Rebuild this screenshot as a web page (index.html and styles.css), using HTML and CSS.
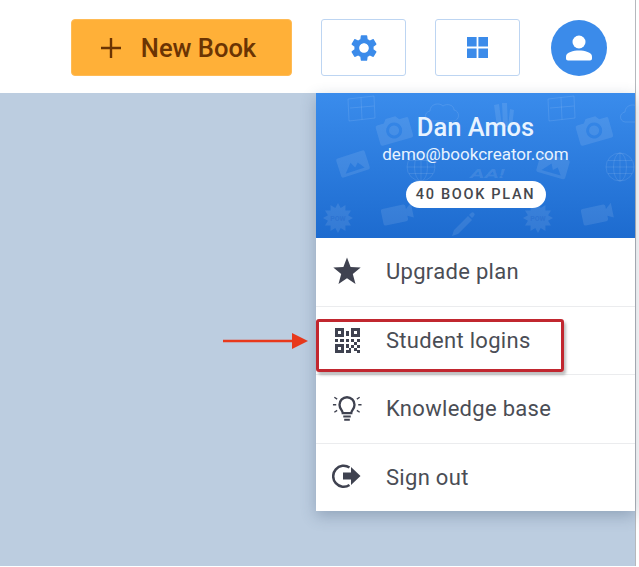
FILE: index.html
```html
<!DOCTYPE html>
<html lang="en">
<head>
<meta charset="utf-8">
<title>Book Creator</title>
<link rel="stylesheet" href="styles.css">
</head>
<body>
<div class="app">
  <header class="topbar">
    <button class="new-book">
      <svg class="plus" viewBox="0 0 22 22"><path d="M11 1v20M1 11h20"/></svg>
      <span>New Book</span>
    </button>
    <button class="tool">
      <svg class="tool-icon" viewBox="0 0 24 24"><path fill-rule="evenodd" d="M19.14 12.94c.04-.3.06-.61.06-.94 0-.32-.02-.64-.07-.94l2.03-1.58c.18-.14.23-.41.12-.61l-1.92-3.32c-.12-.22-.37-.29-.59-.22l-2.39.96c-.5-.38-1.03-.7-1.62-.94l-.36-2.54c-.04-.24-.24-.41-.48-.41h-3.84c-.24 0-.43.17-.47.41l-.36 2.54c-.59.24-1.13.57-1.62.94l-2.39-.96c-.22-.08-.47 0-.59.22L2.74 8.87c-.12.21-.08.47.12.61l2.03 1.58c-.05.3-.09.63-.09.94s.02.64.07.94l-2.03 1.58c-.18.14-.23.41-.12.61l1.92 3.32c.12.22.37.29.59.22l2.39-.96c.5.38 1.03.7 1.62.94l.36 2.54c.05.24.24.41.48.41h3.84c.24 0 .44-.17.47-.41l.36-2.54c.59-.24 1.13-.56 1.62-.94l2.39.96c.22.08.47 0 .59-.22l1.92-3.32c.12-.22.07-.47-.12-.61l-2.01-1.58zM12 15.6c-1.98 0-3.6-1.62-3.6-3.6s1.62-3.6 3.6-3.6 3.6 1.62 3.6 3.6-1.62 3.6-3.6 3.6z"/></svg>
    </button>
    <button class="tool">
      <svg class="grid-icon" viewBox="0 0 21 21"><path d="M0 0h9.6v9.6H0zM11.4 0H21v9.6h-9.6zM0 11.4h9.6V21H0zM11.4 11.4H21V21h-9.6z"/></svg>
    </button>
    <button class="avatar">
      <svg class="avatar-icon" viewBox="0 0 26 26"><circle cx="13" cy="7" r="6.5"/><path d="M2 25.500c-1.200 0-2-.8-2-2v-1.900C0 17.400 7.500 15.600 13 15.600s13 1.800 13 6v1.900c0 1.200-.8 2-2 2z"/></svg>
    </button>
  </header>
  <main class="stage">
    <svg class="arrow" viewBox="0 0 86 18"><path d="M0 9h70" stroke-width="2.4"/><path class="arrow-head" d="M69 1l16 8-16 8z"/></svg>
    <nav class="menu">
      <section class="profile">
        <svg class="pattern" viewBox="0 0 319 145">
          <defs>
            <g id="camera"><path fill-rule="evenodd" d="M-15-9h7l3-4h10l3 4h7a2 2 0 0 1 2 2v17a2 2 0 0 1-2 2h-30a2 2 0 0 1-2-2V-7a2 2 0 0 1 2-2zM0-7.500a8 8 0 1 0 .1 0zM0-4.500a5 5 0 1 1-.1 0z"/></g>
            <g id="picture"><path fill-rule="evenodd" d="M-13-10h26a2 2 0 0 1 2 2v16a2 2 0 0 1-2 2h-26a2 2 0 0 1-2-2V-8a2 2 0 0 1 2-2zM-10 7h20l-5-7-4 4-3-6z"/></g>
            <g id="globe"><circle r="14"/><ellipse rx="6.500" ry="14"/><path d="M-14 0h28M-12-6.500h24M-12 6.500h24M0-14v28"/></g>
            <g id="frame"><path d="M-13-10l26-3 1 22-26 3zM-11-1l24-2M0-11.500l1 22"/></g>
            <g id="cloud"><path d="M-13 9c-6-1-6-9 0-10 0-7 9-9 13-5 4-3 11-1 11 4 6 1 6 10 0 11z"/></g>
            <g id="burst"><path d="M15 0L10.100 2.700 13 7.500 7.400 7.400 7.500 13 2.700 10.100 0 15-2.700 10.100-7.500 13-7.400 7.400-13 7.500-10.100 2.700-15 0-10.100-2.700-13-7.500-7.400-7.400-7.500-13-2.700-10.100 0-15 2.700-10.100 7.500-13 7.400-7.400 13-7.500 10.100-2.700z"/></g>
            <g id="video"><path d="M-15-7a2 2 0 0 1 2-2H8a2 2 0 0 1 2 2v3l6-5v15l-6-3v3a2 2 0 0 1-2 2h-21a2 2 0 0 1-2-2z"/></g>
          </defs>
          <g class="pat-line">
            <use href="#frame" transform="translate(45 16)"/>
            <use href="#frame" transform="translate(245 16)"/>
            <use href="#cloud" transform="translate(127 19)"/>
            <use href="#cloud" transform="translate(322 20)"/>
            <use href="#globe" transform="translate(105 74)"/>
            <use href="#globe" transform="translate(304 74)"/>
          </g>
          <g class="pat-fill">
            <use href="#camera" transform="translate(78 37) rotate(-16)"/>
            <use href="#camera" transform="translate(278 37) rotate(-16)"/>
            <use href="#picture" transform="translate(37 71) rotate(-18)"/>
            <use href="#picture" transform="translate(237 73) rotate(16)"/>
            <use href="#burst" transform="translate(22 125)"/>
            <use href="#burst" transform="translate(222 125)"/>
            <use href="#video" transform="translate(81 122) rotate(-12)"/>
            <use href="#video" transform="translate(281 122) rotate(-12)"/>
            <path d="M178 12l5-1 3 22-5 1zM186 10l5 0 1 24-5 0zM194 16l4 1-2 17-4 0z"/>
            <path d="M138 137l14-14 4 4-14 14-6 2zM153 122l2-2a2 2 0 0 1 3 3l-2 2z"/>
            <text class="pat-aa" transform="translate(154 85) scale(1.7 1)">AA!</text>
          </g>
          <text class="pat-pow" x="22" y="128" text-anchor="middle">POW</text>
          <text class="pat-pow" x="222" y="128" text-anchor="middle">POW</text>
        </svg>
        <h1 class="name">Dan Amos</h1>
        <p class="email">demo@bookcreator.com</p>
        <span class="plan">40 BOOK PLAN</span>
      </section>
      <a class="item">
        <svg class="item-icon" viewBox="0 0 30 30"><path class="solid" d="M15 1.500l3.600 9.600 10.100.5-7.900 6.400 2.700 9.900-8.500-5.600-8.500 5.600 2.700-9.900-7.900-6.400 10.100-.5z"/></svg>
        <span>Upgrade plan</span>
      </a>
      <a class="item">
        <svg class="item-icon" viewBox="0 0 30 30"><path class="solid" fill-rule="evenodd" d="M3 4h9v9H3zM6 7v3h3V7zM19 4h9v9h-9zM22 7v3h3V7zM3 20h9v9H3zM6 23v3h3v-3zM14 7h3v5h-3zM3 15h3v3H3zM8 15h4v3H8zM14 15h3v3h-3zM19 15h3v3h-3zM25 15h3v3h-3zM22 18h3v3h-3zM14 20h3v4h-3zM19 21h3v3h-3zM25 21h3v3h-3zM17 24h2v5h-2zM14 26h3v3h-3zM22 24h3v3h-3zM25 26h3v3h-3z"/></svg>
        <span>Student logins</span>
        <span class="highlight"></span>
      </a>
      <a class="item">
        <svg class="item-icon" viewBox="0 0 32 32"><path class="line" d="M11.500 21.500c0-3-3.500-4.500-3.500-9a8 8 0 0 1 16 0c0 4.500-3.500 6-3.500 9z"/><path class="solid" d="M12 24h8v2h-8zM13 27.500h6v2h-6z"/><path class="thin" d="M1 12.500h3.500M28 12.500h3.500M2.500 4.500l3 2M29.500 4.500l-3 2M2.500 20.500l3-2M29.500 20.500l-3-2"/></svg>
        <span>Knowledge base</span>
      </a>
      <a class="item">
        <svg class="item-icon" viewBox="0 0 30 30"><path class="line" d="M17.500 6.500A10.500 10.500 0 1 0 17.500 24"/><path class="solid" d="M11 11.500h8V6l9.500 9-9.500 9v-5.500h-8z"/></svg>
        <span>Sign out</span>
      </a>
    </nav>
  </main>
</div>
</body>
</html>
```
FILE: styles.css
```css
* { box-sizing: border-box; }
html, body { margin: 0; padding: 0; background: #fff; }
body { width: 639px; height: 567px; overflow: hidden; font-family: Roboto, "Liberation Sans", sans-serif; }
.app { width: 636px; height: 566px; display: flex; flex-direction: column; border-right: 1px solid #b5b8bd; }
.topbar { height: 93px; flex: none; background: #fff; display: flex; align-items: center; padding: 2px 28px 0 71px; }
button { font-family: inherit; cursor: pointer; padding: 0; display: flex; align-items: center; justify-content: center; }
.new-book { width: 221px; height: 57px; background: #ffb038; border: 1px solid #ffbb55; border-radius: 4px; color: #6b3403; font-size: 25.500px; font-weight: 500; gap: 19px; padding-right: 7px; }
.plus { width: 22px; height: 22px; fill: none; stroke: #6b3403; stroke-width: 2.4; }
.tool { width: 85px; height: 57px; margin-left: 29px; background: #fff; border: 1px solid #bdd5f2; border-radius: 3px; }
.tool-icon { width: 32px; height: 32px; fill: #3b8bea; }
.grid-icon { width: 21px; height: 21px; fill: #3b8bea; }
.avatar { width: 56px; height: 56px; margin-left: 31px; border: 0; border-radius: 50%; background: #3b8bea; }
.avatar-icon { width: 26px; height: 26px; fill: #fff; }
.stage { flex: 1; background: #bccde0; position: relative; }
.arrow { position: absolute; left: 223px; top: 239px; width: 86px; height: 18px; }
.arrow path { stroke: #e8391c; fill: none; }
.arrow .arrow-head { fill: #e8391c; stroke: none; }
.menu { position: absolute; left: 316px; top: 0; width: 319px; height: 418px; background: #fff; display: flex; flex-direction: column; box-shadow: 0 5px 14px rgba(60, 80, 110, .32); }
.profile { height: 145px; flex: none; position: relative; display: flex; flex-direction: column; align-items: center; color: #e8f3ff; background: linear-gradient(#3a8cec, #1d6bcf); overflow: hidden; }
.pattern { position: absolute; inset: 0; width: 100%; height: 100%; }
.pat-line { fill: none; stroke: rgba(255, 255, 255, .1); stroke-width: 1; }
.pat-fill { fill: rgba(255, 255, 255, .1); }
.pat-aa { font-size: 13px; font-style: italic; font-weight: 700; }
.pat-pow { fill: rgba(30, 100, 200, .4); font-size: 7px; font-weight: 700; }
.name { position: relative; margin: 19px 0 0; font-size: 25.500px; line-height: 30px; font-weight: 500; }
.email { position: relative; margin: 2px 0 0; font-size: 17px; line-height: 20px; }
.plan { position: relative; margin-top: 17px; width: 140px; height: 27px; background: #fff; border-radius: 14px; color: #45474d; font-size: 14.500px; font-weight: 500; letter-spacing: 1.700px; line-height: 27px; text-align: center; }
.item { flex: 1; position: relative; display: flex; align-items: center; gap: 24px; padding-left: 16px; color: #4a4d55; font-size: 22px; letter-spacing: .3px; border-bottom: 1px solid #ebecee; }
.item:last-child { border-bottom: 0; }
.item-icon { width: 30px; height: 30px; flex: none; margin-bottom: 2px; }
.solid { fill: #3f4250; }
.line { fill: none; stroke: #3f4250; stroke-width: 2.500; }
.thin { fill: none; stroke: #3f4250; stroke-width: 1.500; }
.highlight { position: absolute; left: 0; top: 12px; width: 248px; height: 53px; border: 3px solid #c1272f; border-radius: 3px; box-shadow: 2px 3px 3px rgba(90, 90, 90, .4); }
```
